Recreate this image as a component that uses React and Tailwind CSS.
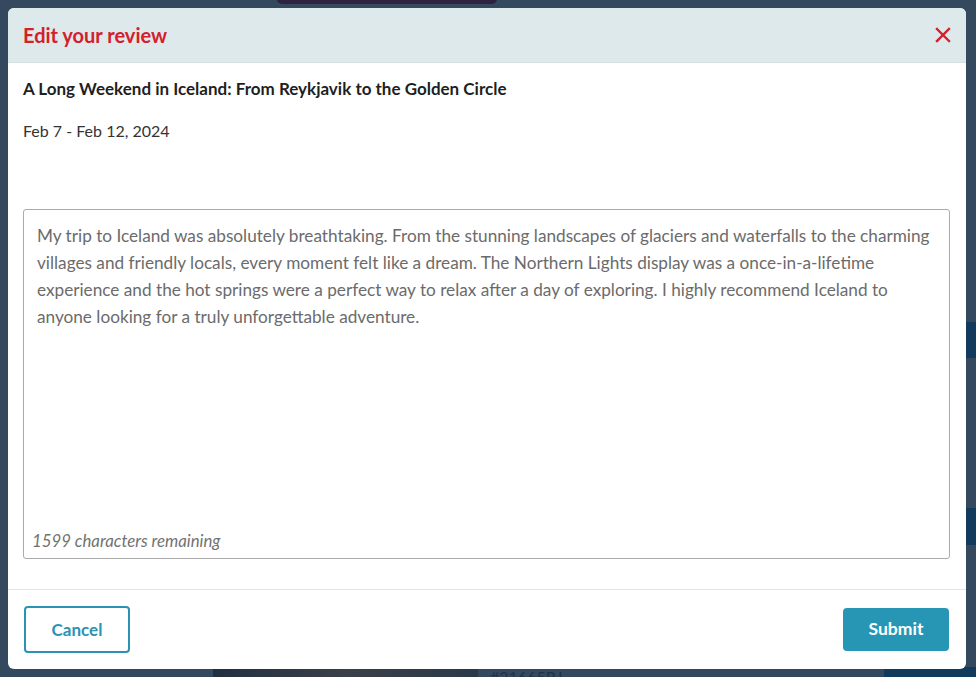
import React from 'react';

const reviewLines = [
    'My trip to Iceland was absolutely breathtaking. From the stunning landscapes of glaciers and waterfalls to the charming',
    'villages and friendly locals, every moment felt like a dream. The Northern Lights display was a once-in-a-lifetime',
    'experience and the hot springs were a perfect way to relax after a day of exploring. I highly recommend Iceland to',
    'anyone looking for a truly unforgettable adventure.',
];

export default function App() {
    return (
        <div className="relative h-[677px] w-[976px] overflow-hidden bg-[#34495e] font-['Lato',sans-serif]">
            {/* page behind the overlay */}
            <div className="absolute left-[277px] top-[-6px] h-[10px] w-[220px] rounded-md bg-[#2f2140]"></div>
            <div className="absolute right-0 top-[322px] h-[36px] w-[20px] bg-[#123a5c]"></div>
            <div className="absolute right-0 top-[508px] h-[37px] w-[20px] bg-[#123a5c]"></div>
            <div className="absolute right-0 bottom-0 h-[10px] w-[92px] bg-[#123a5c]"></div>
            <div className="absolute left-[213px] bottom-0 h-[10px] w-[265px] bg-gradient-to-r from-[#1f3040] via-[#3a3f4a] to-[#283a48]"></div>
            <div className="absolute left-[490px] bottom-0 h-[8px] overflow-hidden text-[16px] leading-4 text-[#1f3248]">#21665RJ</div>

            <div className="relative z-10 flex h-full pb-2 pl-2 pr-[10px] pt-2">
                <div className="flex flex-1 flex-col overflow-hidden rounded-[6px] bg-white">
                    <div className="flex h-[55px] shrink-0 items-center justify-between border-b border-[#d6dfe1] bg-[#dee9eb] pl-[15px] pr-[11px]">
                        <h1 className="text-[20px] font-bold text-[#d3202a]">Edit your review</h1>
                        <button className="flex h-6 w-6 items-center justify-center">
                            <svg width="16" height="16" viewBox="0 0 16 16" fill="none" stroke="#d3202a" strokeWidth="2.4" strokeLinecap="square">
                                <path d="M2 2L14 14M14 2L2 14" />
                            </svg>
                        </button>
                    </div>

                    <div className="flex flex-1 flex-col pb-[30px] pl-[15px] pr-[16px] pt-[14px]">
                        <h2 className="text-[17px] font-bold leading-6 text-[#1f1f1f]">
                            A Long Weekend in Iceland: From Reykjavik to the Golden Circle
                        </h2>
                        <p className="mt-[18px] text-[16px] leading-6 text-[#333]">Feb 7 - Feb 12, 2024</p>

                        <div className="mt-[66px] flex h-[350px] flex-col rounded-[3px] border border-[#aaa] pb-[7px]">
                            <div className="px-[13px] pt-[12px] text-[17.2px] leading-[27px] text-[#6b6b6b]">
                                {reviewLines.map((line) => (
                                    <div key={line} className="whitespace-nowrap">{line}</div>
                                ))}
                            </div>
                            <p className="mt-auto pl-[8px] text-[16.8px] italic leading-5 text-[#727272]">1599 characters remaining</p>
                        </div>
                    </div>

                    <div className="flex items-center justify-between border-t border-[#e3e3e3] pb-[17px] pl-4 pr-[17px] pt-[16px]">
                        <button className="h-[47px] w-[106px] rounded-[4px] border-2 border-[#2a93b3] text-[17px] font-bold text-[#2a93b3]">
                            Cancel
                        </button>
                        <button className="h-[43px] w-[106px] rounded-[4px] bg-[#2796b5] text-[17.5px] font-bold text-white">
                            Submit
                        </button>
                    </div>
                </div>
            </div>
        </div>
    );
}
